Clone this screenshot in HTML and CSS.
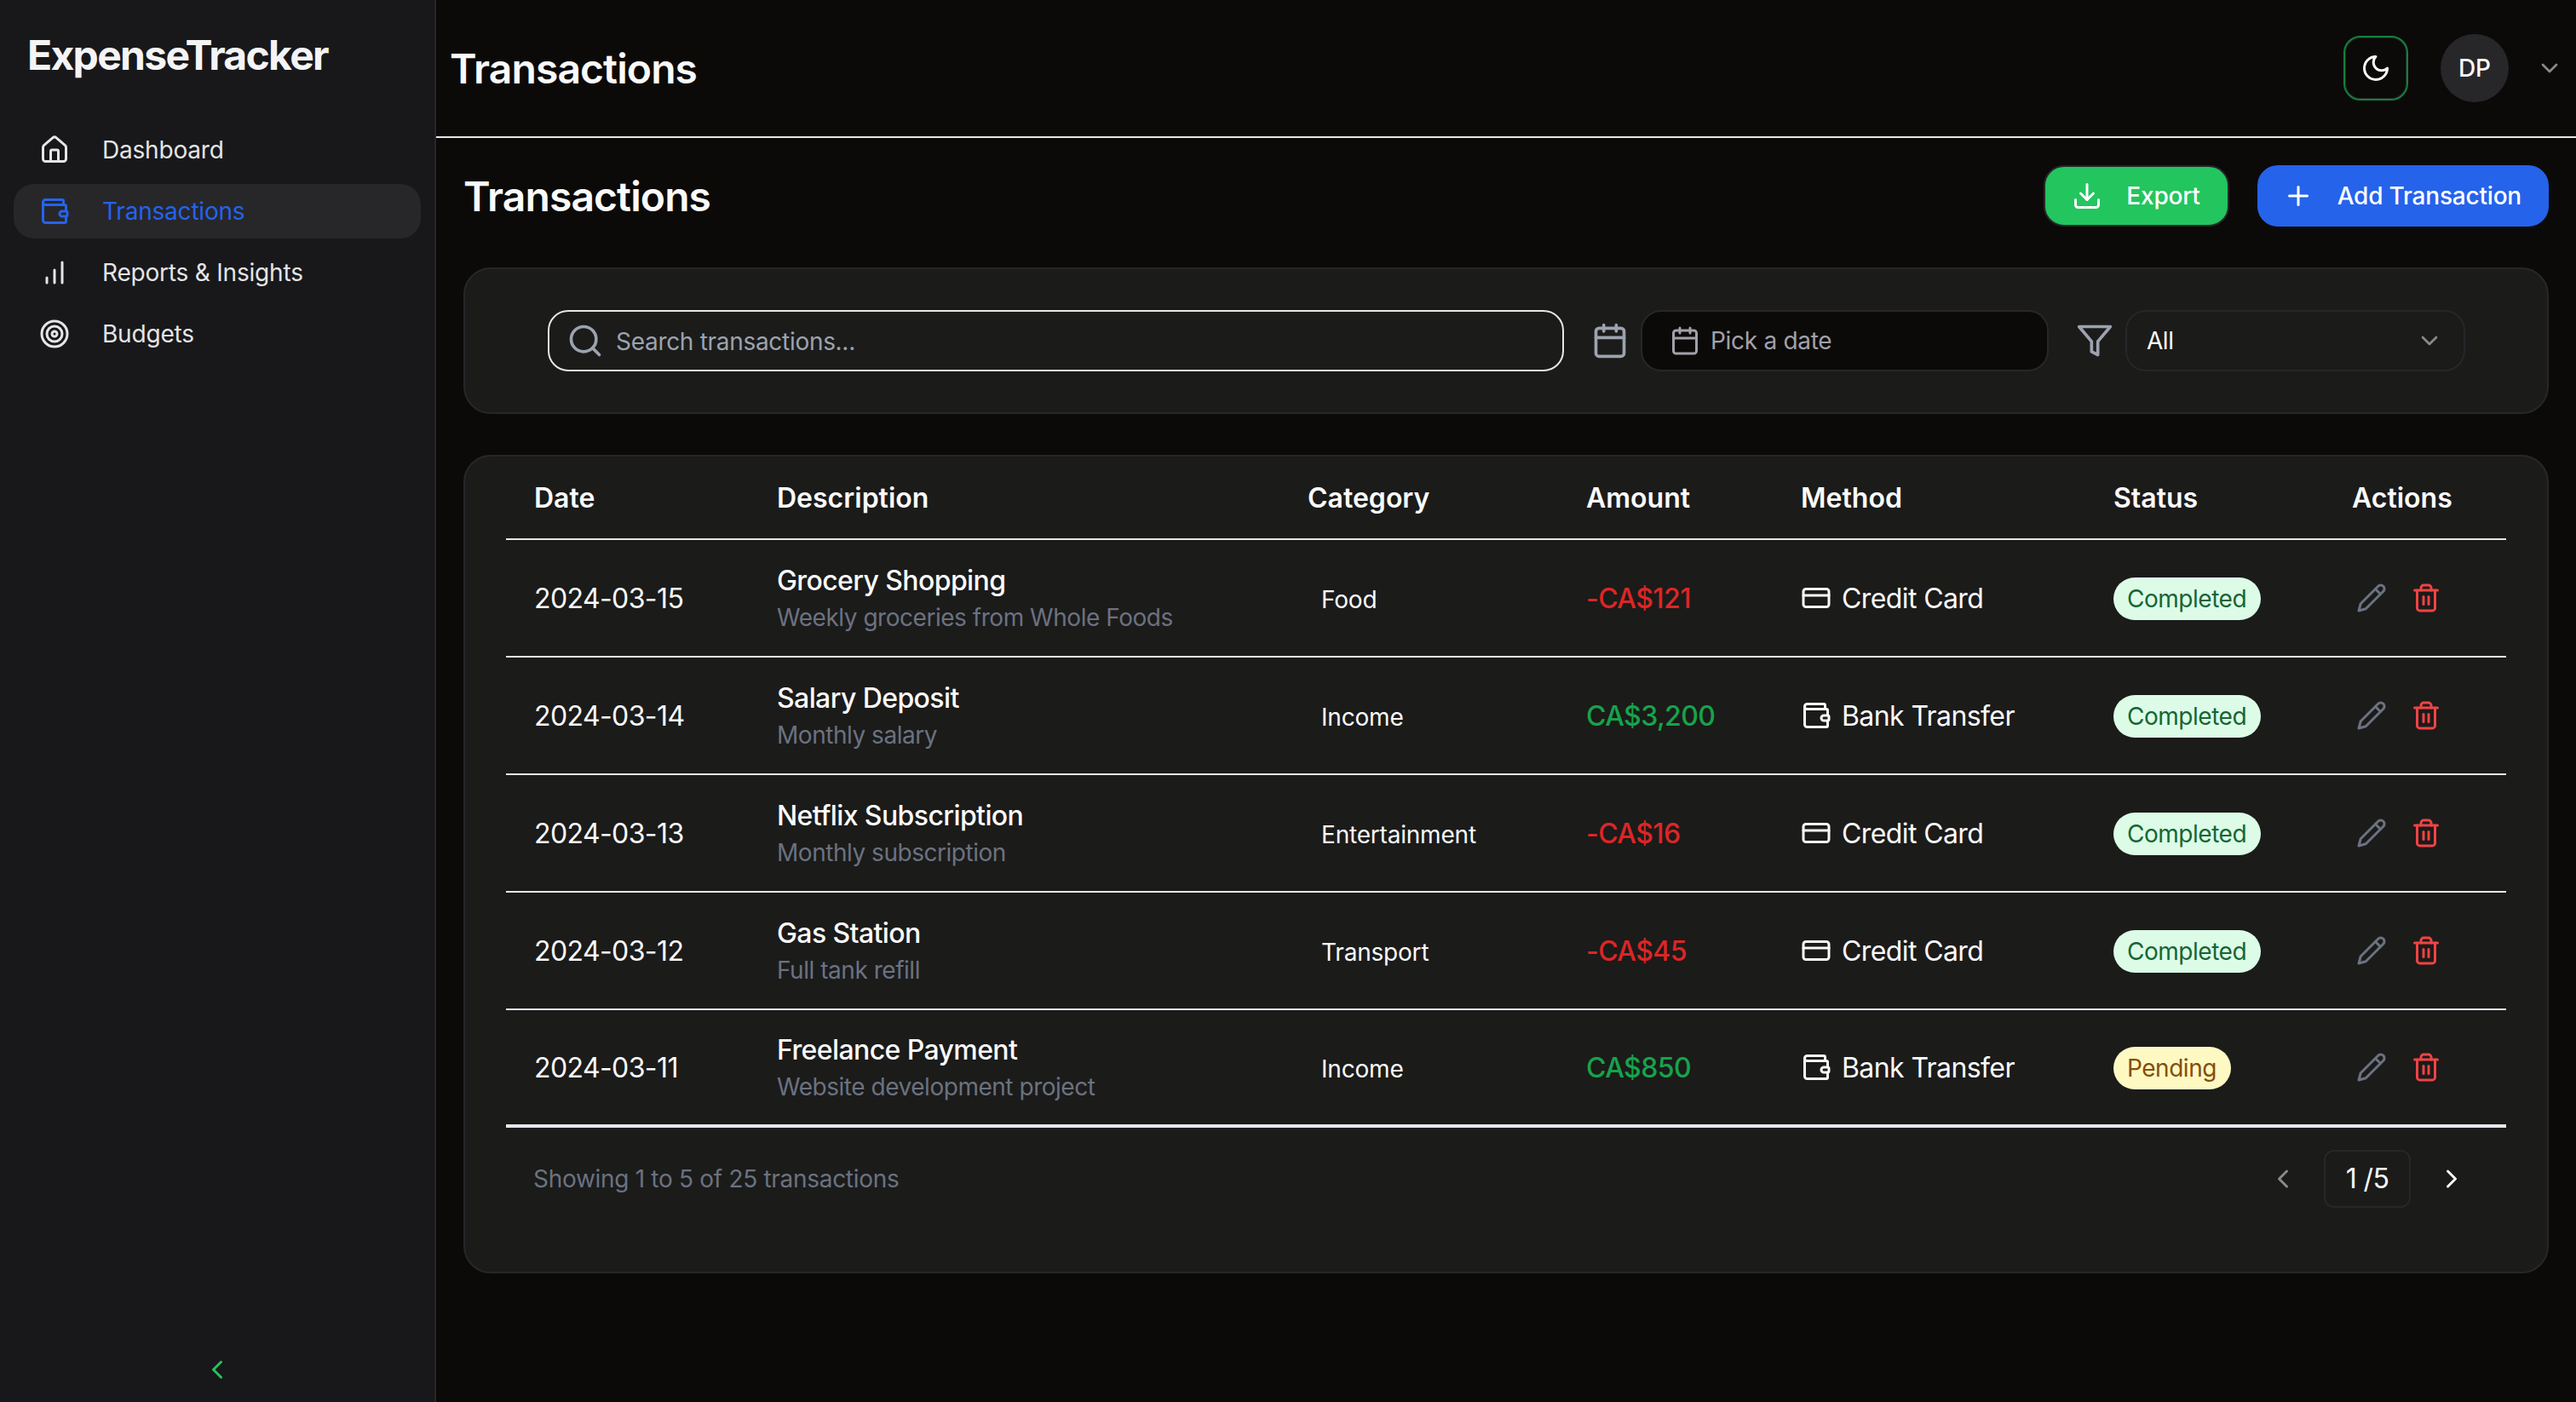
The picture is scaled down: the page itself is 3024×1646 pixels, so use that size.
FILE: index.html
```html
<!DOCTYPE html>
<html lang="en">
<head>
    <meta charset="UTF-8">
    <meta name="viewport" content="width=device-width, initial-scale=1.0">
    <title>ExpenseTracker</title>
    <link rel="stylesheet" href="styles.css">
</head>
<body>
    <!-- Icon set, reused below with <use> -->
    <svg class="icon-defs" xmlns="http://www.w3.org/2000/svg">
        <symbol id="i-house" viewBox="0 0 24 24"><path d="M15 21v-8a1 1 0 0 0-1-1h-4a1 1 0 0 0-1 1v8"/><path d="M3 10a2 2 0 0 1 .709-1.528l7-5.999a2 2 0 0 1 2.582 0l7 5.999A2 2 0 0 1 21 10v9a2 2 0 0 1-2 2H5a2 2 0 0 1-2-2z"/></symbol>
        <symbol id="i-wallet" viewBox="0 0 24 24"><path d="M19 7V4a1 1 0 0 0-1-1H5a2 2 0 0 0 0 4h15a1 1 0 0 1 1 1v4h-3a2 2 0 0 0 0 4h3a1 1 0 0 0 1-1v-2a1 1 0 0 0-1-1"/><path d="M3 5v14a2 2 0 0 0 2 2h15a1 1 0 0 0 1-1v-4"/></symbol>
        <symbol id="i-chart" viewBox="0 0 24 24"><path d="M12 20V10"/><path d="M18 20V4"/><path d="M6 20v-4"/></symbol>
        <symbol id="i-target" viewBox="0 0 24 24"><circle cx="12" cy="12" r="10"/><circle cx="12" cy="12" r="6"/><circle cx="12" cy="12" r="2"/></symbol>
        <symbol id="i-card" viewBox="0 0 24 24"><rect x="2" y="5" width="20" height="14" rx="2"/><path d="M2 10h20"/></symbol>
        <symbol id="i-download" viewBox="0 0 24 24"><path d="M21 15v4a2 2 0 0 1-2 2H5a2 2 0 0 1-2-2v-4"/><path d="m7 10 5 5 5-5"/><path d="M12 15V3"/></symbol>
        <symbol id="i-plus" viewBox="0 0 24 24"><path d="M5 12h14"/><path d="M12 5v14"/></symbol>
        <symbol id="i-moon" viewBox="0 0 24 24"><path d="M12 3a6 6 0 0 0 9 9 9 9 0 1 1-9-9Z"/></symbol>
        <symbol id="i-search" viewBox="0 0 24 24"><circle cx="11" cy="11" r="8"/><path d="m21 21-4.3-4.3"/></symbol>
        <symbol id="i-calendar" viewBox="0 0 24 24"><path d="M8 2v4"/><path d="M16 2v4"/><rect x="3" y="4" width="18" height="18" rx="2"/><path d="M3 10h18"/></symbol>
        <symbol id="i-filter" viewBox="0 0 24 24"><path d="M22 3H2l8 9.46V19l4 2v-8.54z"/></symbol>
        <symbol id="i-down" viewBox="0 0 24 24"><path d="m6 9 6 6 6-6"/></symbol>
        <symbol id="i-left" viewBox="0 0 24 24"><path d="m15 18-6-6 6-6"/></symbol>
        <symbol id="i-right" viewBox="0 0 24 24"><path d="m9 18 6-6-6-6"/></symbol>
        <symbol id="i-pencil" viewBox="0 0 24 24"><path d="M17 3a2.85 2.83 0 1 1 4 4L7.5 20.5 2 22l1.5-5.5Z"/><path d="m15 5 4 4"/></symbol>
        <symbol id="i-trash" viewBox="0 0 24 24"><path d="M3 6h18"/><path d="M19 6v14c0 1-1 2-2 2H7c-1 0-2-1-2-2V6"/><path d="M8 6V4c0-1 1-2 2-2h4c1 0 2 1 2 2v2"/><path d="M10 11v6"/><path d="M14 11v6"/></symbol>
    </svg>

    <aside class="sidebar">
        <div class="logo">ExpenseTracker</div>
        <nav class="nav">
            <a class="nav-item"><svg class="icon"><use href="#i-house"/></svg>Dashboard</a>
            <a class="nav-item active"><svg class="icon"><use href="#i-wallet"/></svg>Transactions</a>
            <a class="nav-item"><svg class="icon"><use href="#i-chart"/></svg>Reports &amp; Insights</a>
            <a class="nav-item"><svg class="icon"><use href="#i-target"/></svg>Budgets</a>
        </nav>
        <button class="collapse-btn"><svg class="icon"><use href="#i-left"/></svg></button>
    </aside>

    <div class="main">
        <header class="topbar">
            <h1 class="topbar-title">Transactions</h1>
            <div class="topbar-right">
                <button class="theme-btn"><svg class="icon"><use href="#i-moon"/></svg></button>
                <div class="avatar">DP</div>
                <svg class="icon icon-small muted-chevron"><use href="#i-down"/></svg>
            </div>
        </header>

        <main class="content">
            <div class="page-head">
                <h2 class="page-title">Transactions</h2>
                <div class="page-actions">
                    <button class="button button-green"><svg class="icon"><use href="#i-download"/></svg>Export</button>
                    <button class="button button-blue"><svg class="icon"><use href="#i-plus"/></svg>Add Transaction</button>
                </div>
            </div>

            <!-- Filters -->
            <section class="card filters">
                <label class="search">
                    <svg class="icon icon-large"><use href="#i-search"/></svg>
                    <input class="search-input" type="text" placeholder="Search transactions...">
                </label>
                <div class="filter-group">
                    <svg class="icon icon-large"><use href="#i-calendar"/></svg>
                    <button class="date-btn"><svg class="icon"><use href="#i-calendar"/></svg>Pick a date</button>
                </div>
                <div class="filter-group">
                    <svg class="icon icon-large"><use href="#i-filter"/></svg>
                    <button class="select-btn">All<svg class="icon icon-small"><use href="#i-down"/></svg></button>
                </div>
            </section>

            <!-- Transactions table -->
            <section class="card table-card">
                <table class="table">
                    <thead>
                        <tr>
                            <th class="col-date">Date</th>
                            <th class="col-desc">Description</th>
                            <th class="col-cat">Category</th>
                            <th class="col-amount">Amount</th>
                            <th class="col-method">Method</th>
                            <th class="col-status">Status</th>
                            <th class="col-actions">Actions</th>
                        </tr>
                    </thead>
                    <tbody>
                        <tr>
                            <td>2024-03-15</td>
                            <td><div class="desc-title">Grocery Shopping</div><div class="desc-sub">Weekly groceries from Whole Foods</div></td>
                            <td><span class="category">Food</span></td>
                            <td class="amount-out">-CA$121</td>
                            <td><div class="method"><svg class="icon"><use href="#i-card"/></svg>Credit Card</div></td>
                            <td><span class="badge badge-done">Completed</span></td>
                            <td><div class="row-actions"><svg class="icon edit"><use href="#i-pencil"/></svg><svg class="icon delete"><use href="#i-trash"/></svg></div></td>
                        </tr>
                        <tr>
                            <td>2024-03-14</td>
                            <td><div class="desc-title">Salary Deposit</div><div class="desc-sub">Monthly salary</div></td>
                            <td><span class="category">Income</span></td>
                            <td class="amount-in">CA$3,200</td>
                            <td><div class="method"><svg class="icon"><use href="#i-wallet"/></svg>Bank Transfer</div></td>
                            <td><span class="badge badge-done">Completed</span></td>
                            <td><div class="row-actions"><svg class="icon edit"><use href="#i-pencil"/></svg><svg class="icon delete"><use href="#i-trash"/></svg></div></td>
                        </tr>
                        <tr>
                            <td>2024-03-13</td>
                            <td><div class="desc-title">Netflix Subscription</div><div class="desc-sub">Monthly subscription</div></td>
                            <td><span class="category">Entertainment</span></td>
                            <td class="amount-out">-CA$16</td>
                            <td><div class="method"><svg class="icon"><use href="#i-card"/></svg>Credit Card</div></td>
                            <td><span class="badge badge-done">Completed</span></td>
                            <td><div class="row-actions"><svg class="icon edit"><use href="#i-pencil"/></svg><svg class="icon delete"><use href="#i-trash"/></svg></div></td>
                        </tr>
                        <tr>
                            <td>2024-03-12</td>
                            <td><div class="desc-title">Gas Station</div><div class="desc-sub">Full tank refill</div></td>
                            <td><span class="category">Transport</span></td>
                            <td class="amount-out">-CA$45</td>
                            <td><div class="method"><svg class="icon"><use href="#i-card"/></svg>Credit Card</div></td>
                            <td><span class="badge badge-done">Completed</span></td>
                            <td><div class="row-actions"><svg class="icon edit"><use href="#i-pencil"/></svg><svg class="icon delete"><use href="#i-trash"/></svg></div></td>
                        </tr>
                        <tr>
                            <td>2024-03-11</td>
                            <td><div class="desc-title">Freelance Payment</div><div class="desc-sub">Website development project</div></td>
                            <td><span class="category">Income</span></td>
                            <td class="amount-in">CA$850</td>
                            <td><div class="method"><svg class="icon"><use href="#i-wallet"/></svg>Bank Transfer</div></td>
                            <td><span class="badge badge-pending">Pending</span></td>
                            <td><div class="row-actions"><svg class="icon edit"><use href="#i-pencil"/></svg><svg class="icon delete"><use href="#i-trash"/></svg></div></td>
                        </tr>
                    </tbody>
                </table>
                <div class="table-footer">
                    <span class="showing">Showing 1 to 5 of 25 transactions</span>
                    <div class="pager">
                        <svg class="icon pager-prev"><use href="#i-left"/></svg>
                        <span class="pager-box">1 /5</span>
                        <svg class="icon"><use href="#i-right"/></svg>
                    </div>
                </div>
            </section>
        </main>
    </div>
</body>
</html>
```

FILE: styles.css
```css
* {
    box-sizing: border-box;
}
body {
    margin: 0;
    display: flex;
    height: 100vh;
    overflow: hidden;
    font-family: Inter, "Noto Sans", sans-serif;
    font-size: 28px;
    letter-spacing: -0.47px;
    color: #fafafa;
    background-color: #0c0a09;
}
h1, h2 {
    margin: 0;
}
button {
    font-family: inherit;
    letter-spacing: inherit;
    color: inherit;
    background: none;
    border: none;
    padding: 0;
}
.icon-defs {
    display: none;
}
.icon {
    width: 36px;
    height: 36px;
    flex-shrink: 0;
    fill: none;
    stroke: currentColor;
    stroke-width: 2;
    stroke-linecap: round;
    stroke-linejoin: round;
}
.icon-large {
    width: 44px;
    height: 44px;
    color: #9ca3af;
}
.icon-small {
    width: 32px;
    height: 32px;
}

/* Sidebar */
.sidebar {
    width: 512px;
    flex-shrink: 0;
    display: flex;
    flex-direction: column;
    padding: 0 16px;
    background-color: #18181b;
    border-right: 2px solid #27272a;
}
.logo {
    margin-top: 36px;
    padding-left: 16px;
    height: 58px;
    line-height: 58px;
    font-size: 48px;
    font-weight: 700;
    letter-spacing: -1.7px;
    color: #f4f4f5;
}
.nav {
    margin-top: 50px;
    display: flex;
    flex-direction: column;
    gap: 8px;
    letter-spacing: -0.2px;
}
.nav-item {
    height: 64px;
    display: flex;
    align-items: center;
    gap: 38px;
    padding-left: 30px;
    border-radius: 24px;
    color: #e5e5e5;
}
.nav-item.active {
    background-color: #27272a;
    color: #2563eb;
}
.collapse-btn {
    margin-top: auto;
    margin-bottom: 20px;
    height: 36px;
    display: flex;
    justify-content: center;
    color: #22c55e;
}

/* Top bar */
.main {
    flex: 1;
    min-width: 0;
}
.topbar {
    height: 162px;
    display: flex;
    align-items: center;
    justify-content: space-between;
    padding: 0 15px 0 16px;
    border-bottom: 2px solid #e5e7eb;
}
.topbar-title,
.page-title {
    font-size: 48px;
    font-weight: 600;
    letter-spacing: -0.9px;
}
.topbar-right {
    display: flex;
    align-items: center;
}
.theme-btn {
    width: 76px;
    height: 76px;
    display: flex;
    align-items: center;
    justify-content: center;
    border: 2px solid #15803d;
    box-shadow: inset 0 0 0 1px #27272a;
    border-radius: 20px;
}
.avatar {
    width: 80px;
    height: 80px;
    margin: 0 32px 0 38px;
    display: flex;
    align-items: center;
    justify-content: center;
    border-radius: 50%;
    background-color: #27272a;
    font-weight: 500;
    letter-spacing: 0;
}
.muted-chevron {
    color: #8a8a8a;
}

/* Page */
.content {
    padding: 32px;
}
.page-head {
    height: 72px;
    display: flex;
    align-items: center;
    justify-content: space-between;
    margin-bottom: 48px;
}
.page-actions {
    display: flex;
    gap: 33px;
}
.button {
    height: 72px;
    display: flex;
    align-items: center;
    gap: 28px;
    font-size: 28px;
    font-weight: 500;
    letter-spacing: -0.2px;
    color: #fff;
    border-radius: 24px;
    border: 2px solid transparent;
}
.button-green {
    padding: 0 32px 0 31px;
    background-color: #22c55e;
    border-color: #27272a;
}
.button-blue {
    padding: 0 30px 0 28px;
    background-color: #2563eb;
    border-color: #2563eb;
}
.card {
    background-color: #1b1b1a;
    border: 2px solid #27272a;
    border-radius: 32px;
}

/* Filters */
.filters {
    display: flex;
    align-items: center;
    gap: 32px;
    padding: 48px 96px 48px 97px;
    margin-bottom: 48px;
}
.search {
    flex: 1;
    height: 72px;
    display: flex;
    align-items: center;
    gap: 14px;
    padding-left: 20px;
    border: 2px solid #e5e7eb;
    border-radius: 24px;
}
.search-input {
    flex: 1;
    min-width: 0;
    border: none;
    outline: none;
    background: none;
    padding: 2px 0 0;
    font-family: inherit;
    font-size: 28px;
    letter-spacing: -0.3px;
    color: #fafafa;
}
.search-input::placeholder {
    color: #9ca3af;
    opacity: 1;
}
.filter-group {
    display: flex;
    align-items: center;
    gap: 14px;
}
.date-btn,
.select-btn {
    height: 72px;
    display: flex;
    align-items: center;
    font-size: 28px;
    border: 2px solid #27272a;
    border-radius: 24px;
}
.date-btn {
    width: 479px;
    gap: 12px;
    padding-left: 32px;
    letter-spacing: -0.3px;
    color: #a1a1aa;
    background-color: #0c0a09;
}
.select-btn {
    width: 399px;
    justify-content: space-between;
    padding: 0 24px 0 23px;
    color: #fafafa;
}
.select-btn .icon {
    color: #8a8a8a;
}

/* Table */
.table-card {
    height: 961px;
    padding: 0 48px;
}
.table {
    width: 100%;
    table-layout: fixed;
    border-collapse: separate;
    border-spacing: 0;
    font-size: 32px;
    letter-spacing: -0.6px;
}
.col-date { width: 285px; }
.col-desc { width: 624px; }
.col-cat { width: 327px; }
.col-amount { width: 252px; }
.col-method { width: 366px; }
.col-status { width: 281px; }
.table th {
    height: 98px;
    padding: 0 0 0 32px;
    text-align: left;
    font-weight: 600;
    letter-spacing: 0;
    border-bottom: 2px solid #e5e7eb;
}
.table td {
    height: 138px;
    padding: 0 0 0 32px;
    border-bottom: 2px solid #e5e7eb;
}
.table th:first-child,
.table td:first-child,
.table th:nth-child(2),
.table td:nth-child(2),
.table th:nth-child(6),
.table td:nth-child(6) {
    padding-left: 33px;
}
.table tbody tr:last-child td {
    border-bottom-width: 4px;
}
.desc-title {
    padding-top: 2px;
    font-weight: 500;
    line-height: 40px;
}
.desc-sub {
    margin-top: 3px;
    font-size: 28px;
    line-height: 40px;
    letter-spacing: -0.47px;
    color: #6b7280;
}
.category {
    padding-left: 16px;
    font-size: 28px;
    letter-spacing: -0.2px;
}
.amount-out {
    color: #dc2626;
    font-weight: 500;
}
.amount-in {
    color: #16a34a;
    font-weight: 500;
}
.method {
    display: flex;
    align-items: center;
    gap: 12px;
}
.badge {
    display: inline-block;
    height: 50px;
    line-height: 50px;
    margin-top: 2px;
    padding: 0 17px 0 16px;
    font-size: 28px;
    letter-spacing: -0.47px;
    border-radius: 25px;
}
.badge-done {
    background-color: #dcfce7;
    color: #166534;
}
.badge-pending {
    background-color: #fef9c3;
    color: #854d0e;
}
.row-actions {
    display: flex;
    align-items: center;
    gap: 28px;
    padding-left: 5px;
}
.edit {
    color: #6b7280;
}
.delete {
    color: #ef4444;
}
.table-footer {
    display: flex;
    align-items: center;
    justify-content: space-between;
    padding: 26px 46px 0 32px;
}
.showing {
    letter-spacing: -0.3px;
    color: #6b7280;
}
.pager {
    display: flex;
    align-items: center;
    gap: 30px;
}
.pager-prev {
    color: #8a8a8a;
}
.pager-box {
    width: 102px;
    height: 68px;
    line-height: 64px;
    text-align: center;
    font-size: 32px;
    letter-spacing: -0.6px;
    border: 2px solid #27272a;
    border-radius: 12px;
}
```
